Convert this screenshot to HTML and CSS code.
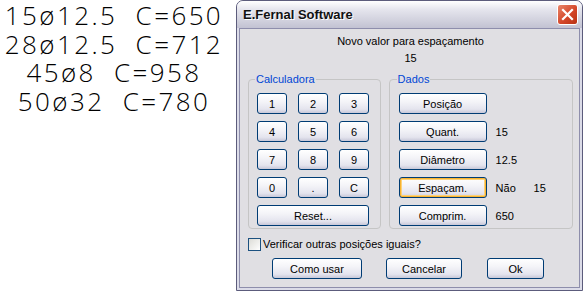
FILE: index.html
```html
<!DOCTYPE html>
<html lang="pt">
<head>
    <meta charset="UTF-8">
    <title>E.Fernal Software</title>
    <link rel="stylesheet" href="styles.css">
</head>
<body>
    <div class="cad">
        <div class="cad-line">15ø12.5  C=650</div>
        <div class="cad-line">28ø12.5  C=712</div>
        <div class="cad-line">45ø8  C=958</div>
        <div class="cad-line">50ø32  C=780</div>
    </div>

    <div class="window">
        <div class="titlebar">
            <span class="title">E.Fernal Software</span>
            <button class="close" aria-label="Fechar">
                <svg width="13" height="13" viewBox="0 0 13 13">
                    <path d="M2 2 L11 11 M11 2 L2 11" stroke="#fff" stroke-width="2.2" stroke-linecap="square"/>
                </svg>
            </button>
        </div>
        <div class="client">
            <div class="prompt">Novo valor para espaçamento</div>
            <div class="prompt-value">15</div>

            <div class="groups">
                <fieldset class="group calc">
                    <legend>Calculadora</legend>
                    <div class="keys">
                        <button class="btn">1</button>
                        <button class="btn">2</button>
                        <button class="btn">3</button>
                        <button class="btn">4</button>
                        <button class="btn">5</button>
                        <button class="btn">6</button>
                        <button class="btn">7</button>
                        <button class="btn">8</button>
                        <button class="btn">9</button>
                        <button class="btn">0</button>
                        <button class="btn">.</button>
                        <button class="btn">C</button>
                        <button class="btn reset">Reset...</button>
                    </div>
                </fieldset>

                <fieldset class="group dados">
                    <legend>Dados</legend>
                    <div class="row"><button class="btn field">Posição</button></div>
                    <div class="row"><button class="btn field">Quant.</button><span class="val">15</span></div>
                    <div class="row"><button class="btn field">Diâmetro</button><span class="val">12.5</span></div>
                    <div class="row"><button class="btn field focus">Espaçam.</button><span class="val val-no">Não</span><span class="val">15</span></div>
                    <div class="row"><button class="btn field">Comprim.</button><span class="val">650</span></div>
                </fieldset>
            </div>

            <label class="check">
                <span class="box"></span>
                Verificar outras posições iguais?
            </label>

            <div class="actions">
                <button class="btn how">Como usar</button>
                <button class="btn cancel">Cancelar</button>
                <button class="btn ok">Ok</button>
            </div>
        </div>
    </div>
</body>
</html>
```

FILE: styles.css
```css
body {
    margin: 0;
    width: 583px;
    height: 291px;
    overflow: hidden;
    background-color: #fff;
    display: flex;
    font-family: "Liberation Sans", Arial, sans-serif;
    font-size: 11px;
    color: #000;
}
.cad {
    width: 228px;
    padding-top: 1px;
    text-align: center;
    font-family: "Open Sans", sans-serif;
    font-weight: 300;
    font-size: 26px;
    letter-spacing: 2.4px;
    color: #000;
}
.cad-line {
    height: 28.5px;
    line-height: 28.5px;
    white-space: pre;
}
.window {
    margin-left: 8px;
    width: 347px;
    height: 291px;
    box-sizing: border-box;
    border: 1px solid #5c5c7c;
    border-radius: 7px 7px 0 0;
    background-color: #dcdce8;
    display: flex;
    flex-direction: column;
}
.titlebar {
    height: 27px;
    display: flex;
    align-items: center;
    justify-content: space-between;
    padding: 0 4px 0 6px;
    border-radius: 6px 6px 0 0;
    background: linear-gradient(#ffffff, #e6e6ee 30%, #d2d2de 70%, #c2c2d2);
}
.title {
    font-family: "Liberation Sans", Arial, sans-serif;
    font-weight: bold;
    font-size: 13px;
    color: #111;
    text-shadow: 1px 1px 0 #fff;
}
.close {
    width: 21px;
    height: 21px;
    padding: 0;
    border: 1px solid #fff;
    border-radius: 3px;
    background: linear-gradient(135deg, #e8866a, #d4472a 55%, #b83214);
    display: flex;
    align-items: center;
    justify-content: center;
}
.client {
    flex: 1;
    margin: 0 2px 2px 2px;
    border: 1px solid #8e8eac;
    background-color: #e0dfe3;
    padding: 0 6px 0 8px;
}
.prompt {
    text-align: center;
    margin-top: 5px;
    line-height: 14px;
}
.prompt-value {
    text-align: center;
    margin-top: 3px;
    line-height: 14px;
}
.groups {
    display: flex;
    gap: 8px;
    margin-top: 7px;
}
.group {
    margin: 0;
    border: 1px solid #c5c5c5;
    border-radius: 4px;
    padding: 7px 8px 2px 8px;
    height: 157px;
    box-sizing: border-box;
}
.group legend {
    color: #0046d5;
    padding: 0 1px;
    margin-left: -2px;
    line-height: 14px;
}
.calc {
    width: 133px;
}
.dados {
    width: 185px;
    padding-left: 9px;
}
.keys {
    display: grid;
    grid-template-columns: repeat(3, 30px);
    column-gap: 11px;
    row-gap: 7px;
}
.btn {
    font-family: "Liberation Sans", Arial, sans-serif;
    font-size: 11px;
    color: #000;
    height: 21px;
    padding: 0;
    border: 1px solid #003c74;
    border-radius: 3px;
    background: linear-gradient(#ffffff, #f4f4f8 40%, #e4e4ee 80%, #c8c8d8);
}
.reset {
    grid-column: 1 / span 3;
}
.row {
    display: flex;
    align-items: center;
    height: 21px;
    margin-bottom: 7px;
}
.field {
    width: 88px;
    margin-right: 9px;
}
.focus {
    box-shadow: inset 0 0 0 1px #f8b330, inset 0 0 0 2px #fcd27a;
}
.val-no {
    width: 38px;
}
.check {
    display: flex;
    align-items: center;
    gap: 2px;
    margin-top: 8px;
    height: 14px;
}
.box {
    width: 11px;
    height: 11px;
    border: 1px solid #1c5180;
    background: linear-gradient(135deg, #dcdcd7, #f4f4f2 70%, #fff);
}
.actions {
    display: flex;
    margin-top: 7px;
    padding-left: 24px;
}
.how {
    width: 90px;
}
.cancel {
    width: 76px;
    margin-left: 24px;
}
.ok {
    width: 57px;
    margin-left: 25px;
}
```
